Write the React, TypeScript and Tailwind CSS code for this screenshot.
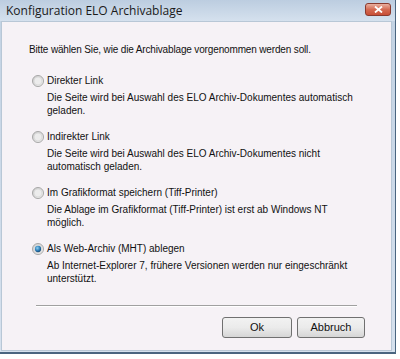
const OPTIONS = [
  {
    label: 'Direkter Link',
    desc: ['Die Seite wird bei Auswahl des ELO Archiv-Dokumentes automatisch', 'geladen.'],
    checked: false,
  },
  {
    label: 'Indirekter Link',
    desc: ['Die Seite wird bei Auswahl des ELO Archiv-Dokumentes nicht', 'automatisch geladen.'],
    checked: false,
  },
  {
    label: 'Im Grafikformat speichern (Tiff-Printer)',
    desc: ['Die Ablage im Grafikformat (Tiff-Printer) ist erst ab Windows NT', 'möglich.'],
    checked: false,
  },
  {
    label: 'Als Web-Archiv (MHT) ablegen',
    desc: ['Ab Internet-Explorer 7, frühere Versionen werden nur eingeschränkt', 'unterstützt.'],
    checked: true,
  },
]

function Radio({ checked }: { checked: boolean }) {
  return (
    <svg width="12" height="12" viewBox="0 0 13 13" className="shrink-0">
      <defs>
        <linearGradient id="rb" x1="0" y1="0" x2="1" y2="1">
          <stop offset="0" stopColor="#c9c9c9" />
          <stop offset="1" stopColor="#f4f4f4" />
        </linearGradient>
        <radialGradient id="rd" cx="0.4" cy="0.35" r="0.7">
          <stop offset="0" stopColor="#8fd0f2" />
          <stop offset="0.6" stopColor="#2a7bb5" />
          <stop offset="1" stopColor="#12406a" />
        </radialGradient>
      </defs>
      <circle cx="6.5" cy="6.5" r="6" fill="url(#rb)" stroke="#a4a4a4" strokeWidth="1" />
      <circle cx="6.5" cy="6.5" r="4.3" fill="#ececec" stroke="#d0d0d0" strokeWidth="0.6" />
      {checked && <circle cx="6.5" cy="6.5" r="3.4" fill="url(#rd)" />}
    </svg>
  )
}

export default function App() {
  return (
    <div className="w-[400px] h-[359px] bg-white" style={{ fontFamily: '"Liberation Sans", Arial, sans-serif' }}>
      <div className="w-[396px] h-[354px] flex flex-col bg-gradient-to-b from-[#c2d2e3] to-[#d6e1ee] border-r border-b-2 border-[#4a6580]">
        {/* title bar */}
        <div className="h-[21px] flex items-center justify-between pl-[6px] pr-[4px] bg-gradient-to-b from-[#bccde0] to-[#d5e1ee]">
          <span className="text-[12px] text-[#1a1a1a] leading-none" style={{ fontFamily: '"Open Sans", "Noto Sans", sans-serif' }}>
            Konfiguration ELO Archivablage
          </span>
          <div className="w-[26px] h-[13px] rounded-[3px] border border-[#8a3a2e] bg-gradient-to-b from-[#e8b0a0] via-[#d46a52] to-[#c84e36] flex items-center justify-center mt-[-3px]">
            <svg width="9" height="7" viewBox="0 0 9 7">
              <path d="M1 0.5 L8 6.5 M8 0.5 L1 6.5" stroke="#ffffff" strokeWidth="1.8" />
            </svg>
          </div>
        </div>

        {/* client area */}
        <div className="flex-1 ml-[1px] mr-[3px] mb-[1px] bg-[#f6f2f6] border border-[#b8c7d6] flex flex-col text-[10px] text-[#111] leading-[13px]">
          <p className="pl-[27px] pt-[21px] tracking-[-0.15px]">Bitte wählen Sie, wie die Archivablage vorgenommen werden soll.</p>

          <div className="flex flex-col pt-[18px]">
            {OPTIONS.map(o => (
              <div key={o.label} className="flex flex-col h-[56px] pl-[30px]">
                <div className="flex items-center gap-[3px]">
                  <Radio checked={o.checked} />
                  <span>{o.label}</span>
                </div>
                <div className="pl-[15px] pt-[4px]">
                  {o.desc.map(d => (
                    <p key={d}>{d}</p>
                  ))}
                </div>
              </div>
            ))}
          </div>

          <div className="mx-[34px] mt-[7px] h-px bg-[#a0a0a0] border-b border-white box-content" />

          <div className="flex justify-end gap-[5px] pr-[26px] pt-[10px]">
            <button className="w-[70px] h-[21px] rounded-[3px] border border-[#707070] bg-gradient-to-b from-[#f2f2f2] via-[#ebebeb] to-[#d6d6d6] text-[11px] text-[#111]">
              Ok
            </button>
            <button className="w-[68px] h-[21px] rounded-[3px] border border-[#707070] bg-gradient-to-b from-[#f2f2f2] via-[#ebebeb] to-[#d6d6d6] text-[11px] text-[#111]">
              Abbruch
            </button>
          </div>
        </div>
      </div>
    </div>
  )
}
